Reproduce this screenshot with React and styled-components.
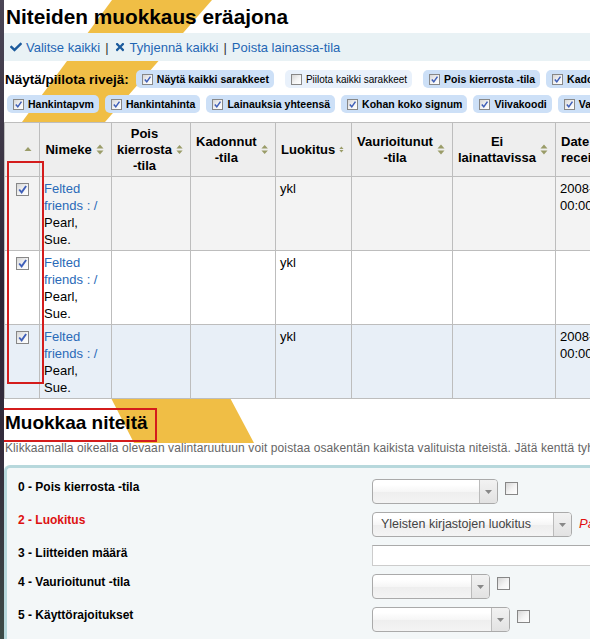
import React from 'react';
import styled, { createGlobalStyle } from 'styled-components';
import { FaCheck, FaTimes } from 'react-icons/fa';

const GlobalStyle = createGlobalStyle`
  html, body {
    margin: 0;
    padding: 0;
  }
  body {
    font-family: "Liberation Sans", Arial, sans-serif;
    background: linear-gradient(180deg, #4b4656 0%, #2e2636 45%, #342c3c 70%, #3d4b47 100%);
    overflow: hidden;
  }
`;

const columns = [
  { key: 'sel', label: '', width: 35, single: true },
  { key: 'title', label: 'Nimeke', width: 72 },
  { key: 'withdrawn', label: 'Pois kierrosta -tila', width: 79 },
  { key: 'lost', label: 'Kadonnut -tila', width: 85 },
  { key: 'class', label: 'Luokitus', width: 76 },
  { key: 'damaged', label: 'Vaurioitunut -tila', width: 101 },
  { key: 'notforloan', label: 'Ei lainattavissa', width: 103 },
  { key: 'date', label: 'Date received', width: 60, left: true },
];

const rows = [
  { bg: '#f3f3f3', date: true },
  { bg: '#ffffff', date: false },
  { bg: '#e8eff7', date: true },
];

const toggleRow1 = [
  { label: 'Näytä kaikki sarakkeet', checked: true },
  { label: 'Piilota kaikki sarakkeet', checked: false, muted: true },
  { label: 'Pois kierrosta -tila', checked: true },
  { label: 'Kadonnut -tila', checked: true },
];

const toggleRow2 = ['Hankintapvm', 'Hankintahinta', 'Lainauksia yhteensä', 'Kohan koko signum', 'Viivakoodi', 'Vaurioitunut -tila'];

const Check = ({ checked, size = 12 }) => (
  <ScCheck $size={size}>
    {checked && (
      <svg width={size - 2} height={size - 2} viewBox="0 0 10 10">
        <path d="M2 5 L4.2 7.6 L8.3 1.8" fill="none" stroke="#3f5fb8" strokeWidth="1.7" />
      </svg>
    )}
  </ScCheck>
);

const SortIcon = ({ single }) => (
  <svg width="8" height="11" viewBox="0 0 8 11">
    <path d={single ? 'M0.5 7 L4 3 L7.5 7 Z' : 'M0.5 4.5 L4 0.5 L7.5 4.5 Z M0.5 6.5 L4 10.5 L7.5 6.5 Z'} fill="#9a9c68" />
  </svg>
);

const Select = ({ width, value }) => (
  <ScSelect $width={width}>
    <ScSelectValue>{value}</ScSelectValue>
    <ScSelectArrow>
      <svg width="7" height="4" viewBox="0 0 7 4">
        <path d="M0 0 L7 0 L3.5 4 Z" fill="#888" />
      </svg>
    </ScSelectArrow>
  </ScSelect>
);

const App = () => {
  return (
    <>
      <GlobalStyle />
      <ScPage>
        <ScStripes width="590" height="639">
          <polygon points="108,0 208,0 101,122 18,122" fill="#f0be45" />
          <polygon points="106,396 225,396 250,443 130,443" fill="#f0be45" />
        </ScStripes>

        <ScContent>
          <ScTitle>Niteiden muokkaus eräajona</ScTitle>

          <ScToolbar>
            <ScToolLink><FaCheck />Valitse kaikki</ScToolLink>
            <span>|</span>
            <ScToolLink><FaTimes />Tyhjennä kaikki</ScToolLink>
            <span>|</span>
            <ScToolLink>Poista lainassa-tila</ScToolLink>
          </ScToolbar>

          <ScToggleRow $first>
            <ScToggleLabel>Näytä/piilota rivejä:</ScToggleLabel>
            {toggleRow1.map((t) => (
              <ScPill key={t.label} $muted={t.muted}>
                <Check checked={t.checked} size={11} />
                {t.label}
              </ScPill>
            ))}
          </ScToggleRow>
          <ScToggleRow>
            {toggleRow2.map((t) => (
              <ScPill key={t}>
                <Check checked size={11} />
                {t}
              </ScPill>
            ))}
          </ScToggleRow>

          <ScTable>
            <colgroup>
              {columns.map((c) => <col key={c.key} style={{ width: c.width }} />)}
            </colgroup>
            <thead>
              <tr>
                {columns.map((c) => (
                  <ScTh key={c.key}>
                    <ScThInner>
                      <ScThLabel $left={c.left}>{c.label}</ScThLabel>
                      <SortIcon single={c.single} />
                    </ScThInner>
                  </ScTh>
                ))}
              </tr>
            </thead>
            <tbody>
              {rows.map((r, i) => (
                <ScRow key={i} $bg={r.bg}>
                  <ScTd $center><ScCellCheck><Check checked size={13} /></ScCellCheck></ScTd>
                  <ScTd><ScLink>Felted friends : /</ScLink> Pearl, Sue.</ScTd>
                  <ScTd />
                  <ScTd />
                  <ScTd>ykl</ScTd>
                  <ScTd />
                  <ScTd />
                  <ScTd $nowrap>{r.date && <>2008-09-26<br />00:00:00</>}</ScTd>
                </ScRow>
              ))}
            </tbody>
          </ScTable>

          <ScSubTitle>Muokkaa niteitä</ScSubTitle>
          <ScHint>Klikkaamalla oikealla olevaan valintaruutuun voit poistaa osakentän kaikista valituista niteistä. Jätä kenttä tyhjäksi, jos et halua muuttaa sitä.</ScHint>

          <ScFormBox>
            <ScFieldList>
              <ScField>
                <ScFieldLabel>0 - Pois kierrosta -tila</ScFieldLabel>
                <Select width={126} />
                <ScFieldCheck><Check size={13} /></ScFieldCheck>
              </ScField>
              <ScField>
                <ScFieldLabel $required>2 - Luokitus</ScFieldLabel>
                <Select width={200} value="Yleisten kirjastojen luokitus" />
                <ScRequired>Pakollinen</ScRequired>
              </ScField>
              <ScField>
                <ScFieldLabel>3 - Liitteiden määrä</ScFieldLabel>
                <ScInput />
              </ScField>
              <ScField>
                <ScFieldLabel>4 - Vaurioitunut -tila</ScFieldLabel>
                <Select width={118} />
                <ScFieldCheck><Check size={13} /></ScFieldCheck>
              </ScField>
              <ScField>
                <ScFieldLabel>5 - Käyttörajoitukset</ScFieldLabel>
                <Select width={138} />
                <ScFieldCheck><Check size={13} /></ScFieldCheck>
              </ScField>
            </ScFieldList>
          </ScFormBox>
        </ScContent>

        <ScHighlight $top={161} $left={3} $w={37} $h={223} />
        <ScHighlight $top={408} $left={-2} $w={155} $h={34} />
      </ScPage>
    </>
  );
};

const ScPage = styled.div`
  position: relative;
  margin-left: 4px;
  width: calc(100vw - 4px);
  height: 100vh;
  background: #fff;
  overflow: hidden;
`;

const ScStripes = styled.svg`
  position: absolute;
  top: 0;
  left: 0;
  z-index: 0;
`;

const ScContent = styled.div`
  position: relative;
  z-index: 1;
`;

const ScTitle = styled.h1`
  margin: 0 0 3px;
  padding: 4px 2px 0;
  font-size: 20.8px;
  line-height: 26px;
  font-weight: bold;
  color: #000;
`;

const ScToolbar = styled.div`
  display: flex;
  align-items: center;
  gap: 5px;
  height: 28px;
  padding: 0 6px;
  background: #e9f2f5;
  font-size: 13px;
  color: #333;
  white-space: nowrap;
`;

const ScToolLink = styled.a`
  display: inline-flex;
  align-items: center;
  gap: 4px;
  color: #1f66b4;
  text-decoration: none;
  svg {
    color: #1b5a9c;
    font-size: 12px;
  }
`;

const ScToggleRow = styled.div`
  display: flex;
  align-items: center;
  gap: 6px;
  height: 18px;
  margin-top: ${(p) => (p.$first ? '9px' : '7px')};
  padding-left: 3px;
  white-space: nowrap;
`;

const ScToggleLabel = styled.span`
  margin: 0 1px 0 -2px;
  font-size: 13.5px;
  font-weight: bold;
  color: #000;
`;

const ScPill = styled.label`
  display: inline-flex;
  align-items: center;
  gap: 4px;
  flex-shrink: 0;
  height: 18px;
  margin: ${(p) => (p.$muted ? '0 5px' : '0')};
  padding: 0 5px 0 6px;
  border-radius: 5px;
  background: ${(p) => (p.$muted ? '#e9f1fb' : '#cde0f7')};
  font-size: ${(p) => (p.$muted ? '10px' : '10.5px')};
  font-weight: ${(p) => (p.$muted ? 'normal' : 'bold')};
  color: #000;
`;

const ScCheck = styled.span`
  display: inline-flex;
  align-items: center;
  justify-content: center;
  box-sizing: border-box;
  width: ${(p) => p.$size}px;
  height: ${(p) => p.$size}px;
  border: 1px solid #878787;
  background: linear-gradient(135deg, #d6d6d6 0%, #f4f4f4 55%, #ffffff 100%);
  flex-shrink: 0;
`;

const ScTable = styled.table`
  border-collapse: collapse;
  table-layout: fixed;
  width: 611px;
  margin-top: 9px;
  font-size: 13px;
`;

const ScTh = styled.th`
  height: 53px;
  padding: 0 7px 0 5px;
  border: 1px solid #bdbdbd;
  background: #eeeeee;
  font-size: 13px;
  font-weight: bold;
  line-height: 16px;
  color: #000;
`;

const ScThInner = styled.div`
  display: flex;
  align-items: center;
  gap: 4px;
`;

const ScThLabel = styled.span`
  flex: 1;
  text-align: ${(p) => (p.$left ? 'left' : 'center')};
`;

const ScRow = styled.tr`
  background: ${(p) => p.$bg};
`;

const ScTd = styled.td`
  padding: 3px 4px 2px;
  border: 1px solid #bdbdbd;
  vertical-align: top;
  line-height: 17px;
  color: #000;
  text-align: ${(p) => (p.$center ? 'center' : 'left')};
  white-space: ${(p) => (p.$nowrap ? 'nowrap' : 'normal')};
`;

const ScCellCheck = styled.div`
  display: flex;
  justify-content: center;
  padding-top: 3px;
`;

const ScLink = styled.a`
  color: #2a6ab8;
  text-decoration: none;
`;

const ScSubTitle = styled.h2`
  margin: 11px 0 0;
  padding: 0 1px;
  font-size: 19px;
  line-height: 26px;
  font-weight: bold;
  color: #000;
`;

const ScHint = styled.p`
  margin: 5px 0 0;
  padding: 0 1px;
  font-size: 12px;
  letter-spacing: 0.1px;
  line-height: 15px;
  color: #666;
  white-space: nowrap;
`;

const ScFormBox = styled.div`
  margin-top: 9px;
  padding: 11px 0 40px 11px;
  border-top: 3px solid #b7d8dc;
  border-left: 3px solid #b7d8dc;
  border-top-left-radius: 6px;
  background: #f3f7f8;
`;

const ScFieldList = styled.ol`
  display: flex;
  flex-direction: column;
  gap: 8px;
  margin: 0;
  padding: 0;
  list-style: none;
`;

const ScField = styled.li`
  display: flex;
  align-items: flex-start;
`;

const ScFieldLabel = styled.label`
  flex: 0 0 354px;
  padding-top: 1px;
  font-size: 12px;
  line-height: 14px;
  font-weight: bold;
  color: ${(p) => (p.$required ? '#dd1111' : '#000')};
`;

const ScSelect = styled.div`
  display: flex;
  box-sizing: border-box;
  width: ${(p) => p.$width}px;
  height: 25px;
  border: 1px solid #aaa;
  border-radius: 4px;
  background: linear-gradient(180deg, #ffffff 20%, #f6f6f6 50%, #eeeeee 52%, #f4f4f4 100%);
  flex-shrink: 0;
  overflow: hidden;
`;

const ScSelectValue = styled.span`
  flex: 1;
  padding-left: 8px;
  font-size: 12.5px;
  line-height: 23px;
  color: #444;
  white-space: nowrap;
`;

const ScSelectArrow = styled.span`
  display: flex;
  align-items: center;
  justify-content: center;
  width: 17px;
  border-left: 1px solid #bbb;
  background: linear-gradient(180deg, #f2f2f2, #e2e2e2);
`;

const ScFieldCheck = styled.span`
  display: flex;
  margin: 3px 0 0 7px;
`;

const ScRequired = styled.span`
  margin-left: 7px;
  padding-top: 4px;
  font-size: 13px;
  font-style: italic;
  color: #e01010;
  white-space: nowrap;
`;

const ScInput = styled.div`
  box-sizing: border-box;
  width: 260px;
  height: 21px;
  border: 1px solid #ccc;
  border-top-color: #aaa;
  background: #fff;
  flex-shrink: 0;
`;

const ScHighlight = styled.div`
  position: absolute;
  z-index: 2;
  top: ${(p) => p.$top}px;
  left: ${(p) => p.$left}px;
  width: ${(p) => p.$w}px;
  height: ${(p) => p.$h}px;
  box-sizing: border-box;
  border: 2px solid #d41c1c;
  pointer-events: none;
`;

export default App;
